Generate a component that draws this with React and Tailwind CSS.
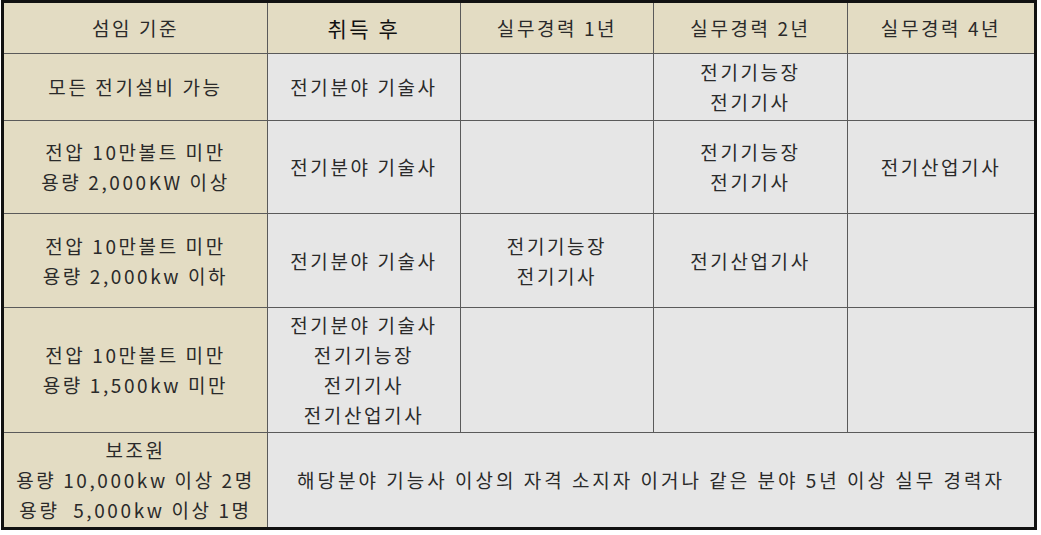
const font = { fontFamily: '"Noto Sans CJK KR", "Noto Sans", sans-serif' };

const rows = [
  { head: ["모든 전기설비 가능"], cells: [["전기분야 기술사"], [], ["전기기능장", "전기기사"], []] },
  { head: ["전압 10만볼트 미만", "용량 2,000KW 이상"], cells: [["전기분야 기술사"], [], ["전기기능장", "전기기사"], ["전기산업기사"]] },
  { head: ["전압 10만볼트 미만", "용량 2,000kw 이하"], cells: [["전기분야 기술사"], ["전기기능장", "전기기사"], ["전기산업기사"], []] },
  { head: ["전압 10만볼트 미만", "용량 1,500kw 미만"], cells: [["전기분야 기술사", "전기기능장", "전기기사", "전기산업기사"], [], [], []] },
];

function Cell({ lines, beige, className = "" }) {
  return (
    <div
      className={
        "flex flex-col items-center justify-center text-center leading-[30px] text-[#2a2a2a] " +
        (beige ? "bg-[#e3dcc3] " : "bg-[#e6e6e6] ") +
        (className || "text-[19px] tracking-[2.6px]")
      }
    >
      {lines.map((l, i) => (
        <div key={i} className="whitespace-pre">{l}</div>
      ))}
    </div>
  );
}

export default function App() {
  return (
    <div className="w-[1041px] h-[535px] bg-white" style={font}>
      <div className="ml-px w-[1036px] border-[3px] border-[#111]">
        <div className="grid grid-cols-[263px_192px_192px_193px_186px] grid-rows-[50px_66px_92px_93px_124px_94px] gap-px bg-[#5a5a5a]">
          <Cell beige lines={["섬임 기준"]} />
          <Cell beige lines={["취득 후"]} className="text-[21px] tracking-[2.6px] !text-[#111]" />
          <Cell beige lines={["실무경력 1년"]} />
          <Cell beige lines={["실무경력 2년"]} />
          <Cell beige lines={["실무경력 4년"]} />
          {rows.map((r, i) => [
            <Cell key={"h" + i} beige lines={r.head} />,
            ...r.cells.map((c, j) => <Cell key={i + "-" + j} lines={c} />),
          ])}
          <Cell beige lines={["보조원", "용량 10,000kw 이상 2명", "용량  5,000kw 이상 1명"]} />
          <div className="col-span-4 flex items-center justify-center bg-[#e6e6e6] text-[19px] tracking-[3px] text-[#2a2a2a]">
            해당분야 기능사 이상의 자격 소지자 이거나 같은 분야 5년 이상 실무 경력자
          </div>
        </div>
      </div>
    </div>
  );
}
